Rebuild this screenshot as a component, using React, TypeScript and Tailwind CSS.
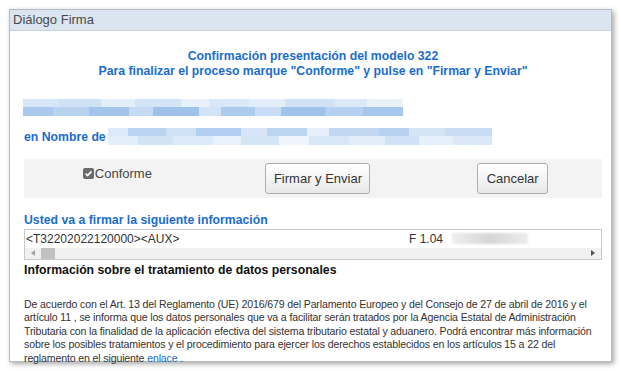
import React from 'react';

const font = { fontFamily: '"Liberation Sans", Arial, sans-serif' };

type Seg = [number, string];

// pixelated blur used for the hidden personal data
const Blur = ({ top, bottom }: { top: Seg[]; bottom: Seg[] }) => (
  <div className="flex flex-col blur-[0.6px]">
    <div className="flex h-[8px]">
      {top.map(([w, c], i) => (
        <span key={i} className="block h-full" style={{ width: w, background: c }} />
      ))}
    </div>
    <div className="flex h-[9px]">
      {bottom.map(([w, c], i) => (
        <span key={i} className="block h-full" style={{ width: w, background: c }} />
      ))}
    </div>
  </div>
);

const row1Top: Seg[] = [
  [36, '#d6e6f7'], [42, '#cfe1f5'], [34, '#e2eefa'], [46, '#d3e4f6'], [28, '#e8f1fb'],
  [40, '#d9e8f8'], [36, '#e4eefa'], [50, '#d1e2f5'], [32, '#dde9f8'], [36, '#e9f2fb'],
];
const row1Bottom: Seg[] = [
  [30, '#a9c9ee'], [36, '#b8d2f0'], [40, '#a3c5ec'], [24, '#c5dbf3'], [46, '#9fc2eb'],
  [22, '#d2e3f6'], [34, '#adcbee'], [26, '#c9ddf4'], [44, '#a0c3ec'], [38, '#b5d0f0'], [40, '#a6c7ed'],
];
const row2Top: Seg[] = [
  [20, '#dbe9f8'], [38, '#b9d3f1'], [30, '#cfe1f5'], [45, '#b1cdf0'], [26, '#d6e6f7'],
  [40, '#bcd5f1'], [22, '#e6f0fa'], [50, '#c2d8f2'], [30, '#b7d1f0'], [36, '#d4e5f6'], [47, '#c8dcf4'],
];
const row2Bottom: Seg[] = [
  [30, '#e3eefa'], [35, '#d2e3f6'], [40, '#dbe9f8'], [28, '#e9f2fb'], [38, '#d4e5f6'],
  [30, '#edf4fc'], [40, '#d8e7f7'], [36, '#e1edf9'], [34, '#d0e2f5'], [34, '#e6f0fa'], [39, '#dae8f8'],
];

export default function App() {
  return (
    <div className="w-[621px] h-[371px] bg-white overflow-hidden pt-[9px] pl-[9px]" style={font}>
      <div className="w-[603px] h-[353px] border border-[#b4bcc4] bg-white shadow-[2px_2px_5px_rgba(0,0,0,0.35)] flex flex-col">
        <div className="h-[27px] bg-[#dae5f0] border-b border-[#c6d2de] flex items-center px-[3px] text-[13px] text-[#4a4a4a]">
          Diálogo Firma
        </div>

        <div className="pl-[14px] pr-[9px] flex flex-col">
          <div className="mt-[18px] text-center text-[12.25px] leading-[15px] font-bold text-[#1a6dcc]">
            <div>Confirmación presentación del modelo 322</div>
            <div>Para finalizar el proceso marque "Conforme" y pulse en "Firmar y Enviar"</div>
          </div>

          <div className="mt-[20px] ml-[-1px]">
            <Blur top={row1Top} bottom={row1Bottom} />
          </div>

          <div className="mt-[12px] flex items-center">
            <span className="text-[12.25px] font-bold text-[#1a6dcc] pr-[2px]">en Nombre de</span>
            <Blur top={row2Top} bottom={row2Bottom} />
          </div>

          <div className="mt-[13px] h-[39px] bg-[#f3f3f3] grid grid-cols-3 items-center">
            <div className="flex items-center justify-center gap-[1px] mt-[-9px] pr-[6px]">
              <span className="w-[11px] h-[11px] rounded-[2px] bg-[#6b6b6b] flex items-center justify-center">
                <svg width="9" height="9" viewBox="0 0 10 10">
                  <path d="M1.8 5.2 L4 7.4 L8.3 2.6" fill="none" stroke="#fff" strokeWidth="1.8" />
                </svg>
              </span>
              <span className="text-[13px] text-[#444]">Conforme</span>
            </div>
            <div className="flex justify-center pl-[10px]">
              <button className="h-[31px] w-[105px] rounded-[3px] border border-[#adadad] bg-gradient-to-b from-white to-[#e9e9e9] text-[13px] text-[#333]">
                Firmar y Enviar
              </button>
            </div>
            <div className="flex justify-center pl-[14px]">
              <button className="h-[31px] w-[71px] rounded-[3px] border border-[#adadad] bg-gradient-to-b from-white to-[#e9e9e9] text-[13px] text-[#333]">
                Cancelar
              </button>
            </div>
          </div>

          <div className="mt-[15px] text-[12.25px] leading-[14px] font-bold text-[#1a6dcc]">
            Usted va a firmar la siguiente información
          </div>

          <div className="mt-[2px] border border-[#c8c8c8] h-[31px] flex flex-col">
            <div className="h-[18px] flex items-center text-[12px] text-[#333] px-[1px]">
              <span className="w-[383px]">&lt;T32202022120000&gt;&lt;AUX&gt;</span>
              <span>F 1.04</span>
              <span className="ml-[9px] w-[76px] h-[11px] bg-gradient-to-r from-[#eeeeee] via-[#d6d6d6] to-[#ececec] blur-[1px]" />
            </div>
            <div className="flex-1 bg-[#f1f1f1] flex items-center">
              <span className="w-[16px] flex justify-center">
                <span className="border-y-[3px] border-y-transparent border-r-[4px] border-r-[#a3a3a3]" />
              </span>
              <span className="w-[14px] h-[11px] bg-[#c1c1c1]" />
              <span className="flex-1" />
              <span className="w-[16px] flex justify-center">
                <span className="border-y-[3px] border-y-transparent border-l-[4px] border-l-[#505050]" />
              </span>
            </div>
          </div>

          <div className="mt-[3px] text-[12.25px] leading-[14px] font-bold text-[#111]">
            Información sobre el tratamiento de datos personales
          </div>

          <p className="mt-[21px] text-[10.6px] tracking-[-0.15px] leading-[13.5px] text-[#333] whitespace-nowrap">
            De acuerdo con el Art. 13 del Reglamento (UE) 2016/679 del Parlamento Europeo y del Consejo de 27 de abril de 2016 y el
            <br />
            artículo 11 , se informa que los datos personales que va a facilitar serán tratados por la Agencia Estatal de Administración
            <br />
            Tributaria con la finalidad de la aplicación efectiva del sistema tributario estatal y aduanero. Podrá encontrar más información
            <br />
            sobre los posibles tratamientos y el procedimiento para ejercer los derechos establecidos en los artículos 15 a 22 del
            <br />
            reglamento en el siguiente <a className="text-[#1a6dcc]">enlace</a> .
          </p>
        </div>
      </div>
    </div>
  );
}
